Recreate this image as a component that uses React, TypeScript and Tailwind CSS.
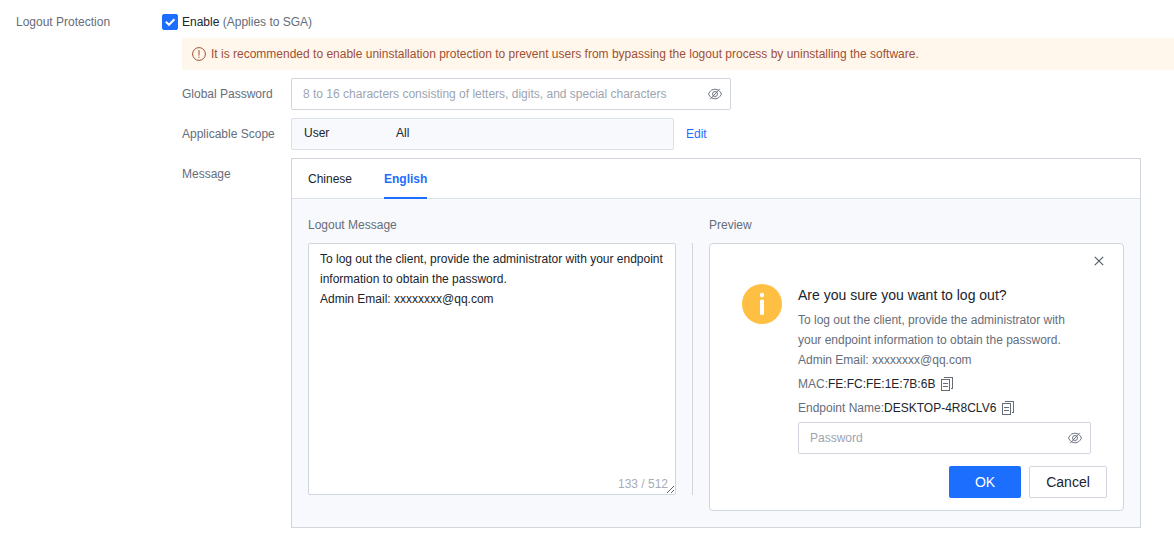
import React, { useState } from 'react';

interface IconProps {
  className?: string;
}

const EyeOffIcon: React.FC<IconProps> = ({ className }) => (
  <svg className={className} width="14" height="14" viewBox="0 0 14 14" fill="none" stroke="currentColor" aria-hidden="true">
    <path d="M0.5 7C2 3.8 4.2 2.2 7 2.2S12 3.8 13.5 7C12 10.2 9.8 11.8 7 11.8S2 10.2 0.5 7Z" strokeWidth="0.9" />
    <circle cx="7" cy="7" r="2.5" strokeWidth="0.9" />
    <path d="M2.2 12.2 11.8 1.8" strokeWidth="0.9" />
  </svg>
);

const CopyIcon: React.FC<IconProps> = ({ className }) => (
  <svg
    className={className}
    width="13"
    height="14"
    viewBox="0 0 13 14"
    fill="none"
    stroke="currentColor"
    shapeRendering="crispEdges"
    aria-hidden="true"
  >
    <path d="M0.5 2.5H8.5V13.5H0.5Z" />
    <path d="M3 0.5H11.5V11.5H10" />
    <path d="M2 6.5H7M2 9.5H7" />
  </svg>
);

const WarningIcon: React.FC<IconProps> = ({ className }) => (
  <svg className={className} width="14" height="14" viewBox="0 0 14 14" fill="none" stroke="currentColor" aria-hidden="true">
    <circle cx="7" cy="7" r="6.4" />
    <path d="M7 3V8.6M7 9.6V10.8" />
  </svg>
);

const InfoIcon: React.FC<IconProps> = ({ className }) => (
  <svg className={className} width="40" height="40" viewBox="0 0 40 40" aria-hidden="true">
    <circle cx="20" cy="20" r="20" fill="#ffbf43" />
    <circle cx="20" cy="11" r="2.2" fill="#fff" />
    <rect x="18" y="15.5" width="4" height="15.5" rx="1.5" fill="#fff" />
  </svg>
);

const CloseIcon: React.FC<IconProps> = ({ className }) => (
  <svg className={className} width="10" height="10" viewBox="0 0 10 10" fill="none" stroke="currentColor" aria-hidden="true">
    <path d="M0.8 0.8 9.2 9.2M9.2 0.8 0.8 9.2" strokeWidth="1.2" />
  </svg>
);

interface PasswordInputProps {
  id: string;
  placeholder: string;
  label?: string;
}

const PasswordInput: React.FC<PasswordInputProps> = ({ id, placeholder, label }) => {
  const [visible, setVisible] = useState(false);

  return (
    <div className="flex h-8 w-full items-center rounded-xs border border-[#d0d5de] bg-white pr-2">
      <input
        id={id}
        type={visible ? 'text' : 'password'}
        placeholder={placeholder}
        aria-label={label}
        className="h-full min-w-0 flex-1 bg-transparent pl-[11px] outline-none placeholder:text-[#9da4b1]"
      />
      <button type="button" aria-label="Toggle visibility" className="text-[#616875]" onClick={() => setVisible(!visible)}>
        <EyeOffIcon />
      </button>
    </div>
  );
};

const DEFAULT_MESSAGE = `To log out the client, provide the administrator with your endpoint information to obtain the password.
Admin Email: xxxxxxxx@qq.com`;

const endpointInfo = [
  { name: 'MAC', value: 'FE:FC:FE:1E:7B:6B' },
  { name: 'Endpoint Name', value: 'DESKTOP-4R8CLV6' },
];

const LogoutPreview: React.FC<{ message: string }> = ({ message }) => (
  <div className="rounded border border-[#d0d5de] bg-white">
    <div className="flex h-10 items-start justify-end pt-3 pr-[19px]">
      <button type="button" aria-label="Close" className="text-[#545c6a]">
        <CloseIcon />
      </button>
    </div>
    <div className="flex gap-4 px-8">
      <InfoIcon className="shrink-0" />
      <div className="min-w-0 flex-1">
        <h3 className="mb-1 text-sm leading-[22px] text-[#20242c]">Are you sure you want to log out?</h3>
        <p className="whitespace-pre-line pb-0.5">{message}</p>
        {endpointInfo.map((item) => (
          <div key={item.name} className="flex h-6 items-center">
            <span>{item.name}:</span>
            <span className="text-[#20242c]">{item.value}</span>
            <button type="button" aria-label={`Copy ${item.name}`} className="ml-1.5">
              <CopyIcon />
            </button>
          </div>
        ))}
        <div className="pt-0.5">
          <PasswordInput id="preview-password" placeholder="Password" label="Password" />
        </div>
      </div>
    </div>
    <div className="flex justify-end gap-2 py-3 pr-4 text-sm">
      <button type="button" className="h-8 w-[72px] rounded-xs bg-[#1c6eff] text-white">OK</button>
      <button type="button" className="h-8 w-[78px] rounded-xs border border-[#d0d5de] bg-white text-[#20242c]">Cancel</button>
    </div>
  </div>
);

const tabs = ['Chinese', 'English'];

const MessagePanel: React.FC = () => {
  const [active, setActive] = useState('English');
  const [message, setMessage] = useState(DEFAULT_MESSAGE);

  return (
    <div className="w-full max-w-[850px] border border-[#d0d5de] bg-[#f7f9fd]">
      <div role="tablist" className="flex h-10 gap-8 border-b border-[#dde1ea] bg-white px-4">
        {tabs.map((tab) => (
          <button
            key={tab}
            type="button"
            role="tab"
            aria-selected={tab === active}
            onClick={() => setActive(tab)}
            className={
              tab === active
                ? '-mb-px border-b-2 border-[#1c6eff] pt-0.5 font-bold text-[#1c6eff]'
                : '-mb-px border-b-2 border-transparent pt-0.5 text-[#20242c]'
            }
          >
            {tab}
          </button>
        ))}
      </div>
      <div className="flex p-4">
        <div className="min-w-0 flex-[368]">
          <label htmlFor="logout-message" className="mb-2 block">Logout Message</label>
          <div className="relative">
            <textarea
              id="logout-message"
              value={message}
              maxLength={512}
              onChange={(e) => setMessage(e.target.value)}
              className="block h-[252px] w-full rounded-xs border border-[#d0d5de] bg-white px-[11px] py-[5px] text-[#20242c] outline-none"
            />
            <span className="pointer-events-none absolute right-2 bottom-px text-[#a6adb8]">133 / 512</span>
          </div>
        </div>
        <div className="mx-4 mt-7 mb-4 w-px bg-[#d0d5de]" />
        <div className="min-w-0 flex-[415]">
          <div className="mb-2">Preview</div>
          <LogoutPreview message={message} />
        </div>
      </div>
    </div>
  );
};

export default function App() {
  return (
    <main className="flex bg-white pt-3 pb-6 pl-4 font-['Liberation_Sans',Arial,sans-serif] text-xs leading-5 text-[#666d79]">
      <div className="w-[146px] shrink-0">Logout Protection</div>
      <div className="min-w-0 flex-1">
        <div className="flex items-center gap-1">
          <span className="relative flex size-4">
            <input
              id="enable-protection"
              type="checkbox"
              defaultChecked
              className="peer size-4 appearance-none rounded-xs border border-[#d0d5de] checked:border-[#1c6eff] checked:bg-[#1c6eff]"
            />
            <svg
              className="pointer-events-none absolute inset-0 hidden peer-checked:block"
              width="16"
              height="16"
              viewBox="0 0 16 16"
              fill="none"
              stroke="#fff"
              strokeWidth="2"
              aria-hidden="true"
            >
              <path d="M3.8 7.8 7 10.8 12.4 5.2" />
            </svg>
          </span>
          <label htmlFor="enable-protection">
            <span className="text-[#20242c]">Enable</span> (Applies to SGA)
          </label>
        </div>

        <div className="ml-5 pt-1.5">
          <div className="mb-2 flex min-h-8 items-center gap-[5px] bg-[#fff7eb] px-2.5 text-[#a04f36]">
            <WarningIcon className="shrink-0" />
            <span>It is recommended to enable uninstallation protection to prevent users from bypassing the logout process by uninstalling the software.</span>
          </div>

          <div className="mb-2 flex">
            <label htmlFor="global-password" className="w-[109px] shrink-0 py-1.5">Global Password</label>
            <div className="w-full max-w-[440px]">
              <PasswordInput
                id="global-password"
                placeholder="8 to 16 characters consisting of letters, digits, and special characters"
              />
            </div>
          </div>

          <div className="mb-2 flex">
            <div className="w-[109px] shrink-0 py-1.5">Applicable Scope</div>
            <div className="flex h-8 w-full max-w-[383px] rounded-xs border border-[#dde1ea] bg-[#f7f9fd] px-3 pt-1 text-[#20242c]">
              <span className="w-[92px]">User</span>
              <span>All</span>
            </div>
            <a href="#" className="ml-3 py-1.5 text-[#1c6eff]">Edit</a>
          </div>

          <div className="flex pr-8">
            <div className="w-[109px] shrink-0 py-1.5">Message</div>
            <MessagePanel />
          </div>
        </div>
      </div>
    </main>
  );
}
